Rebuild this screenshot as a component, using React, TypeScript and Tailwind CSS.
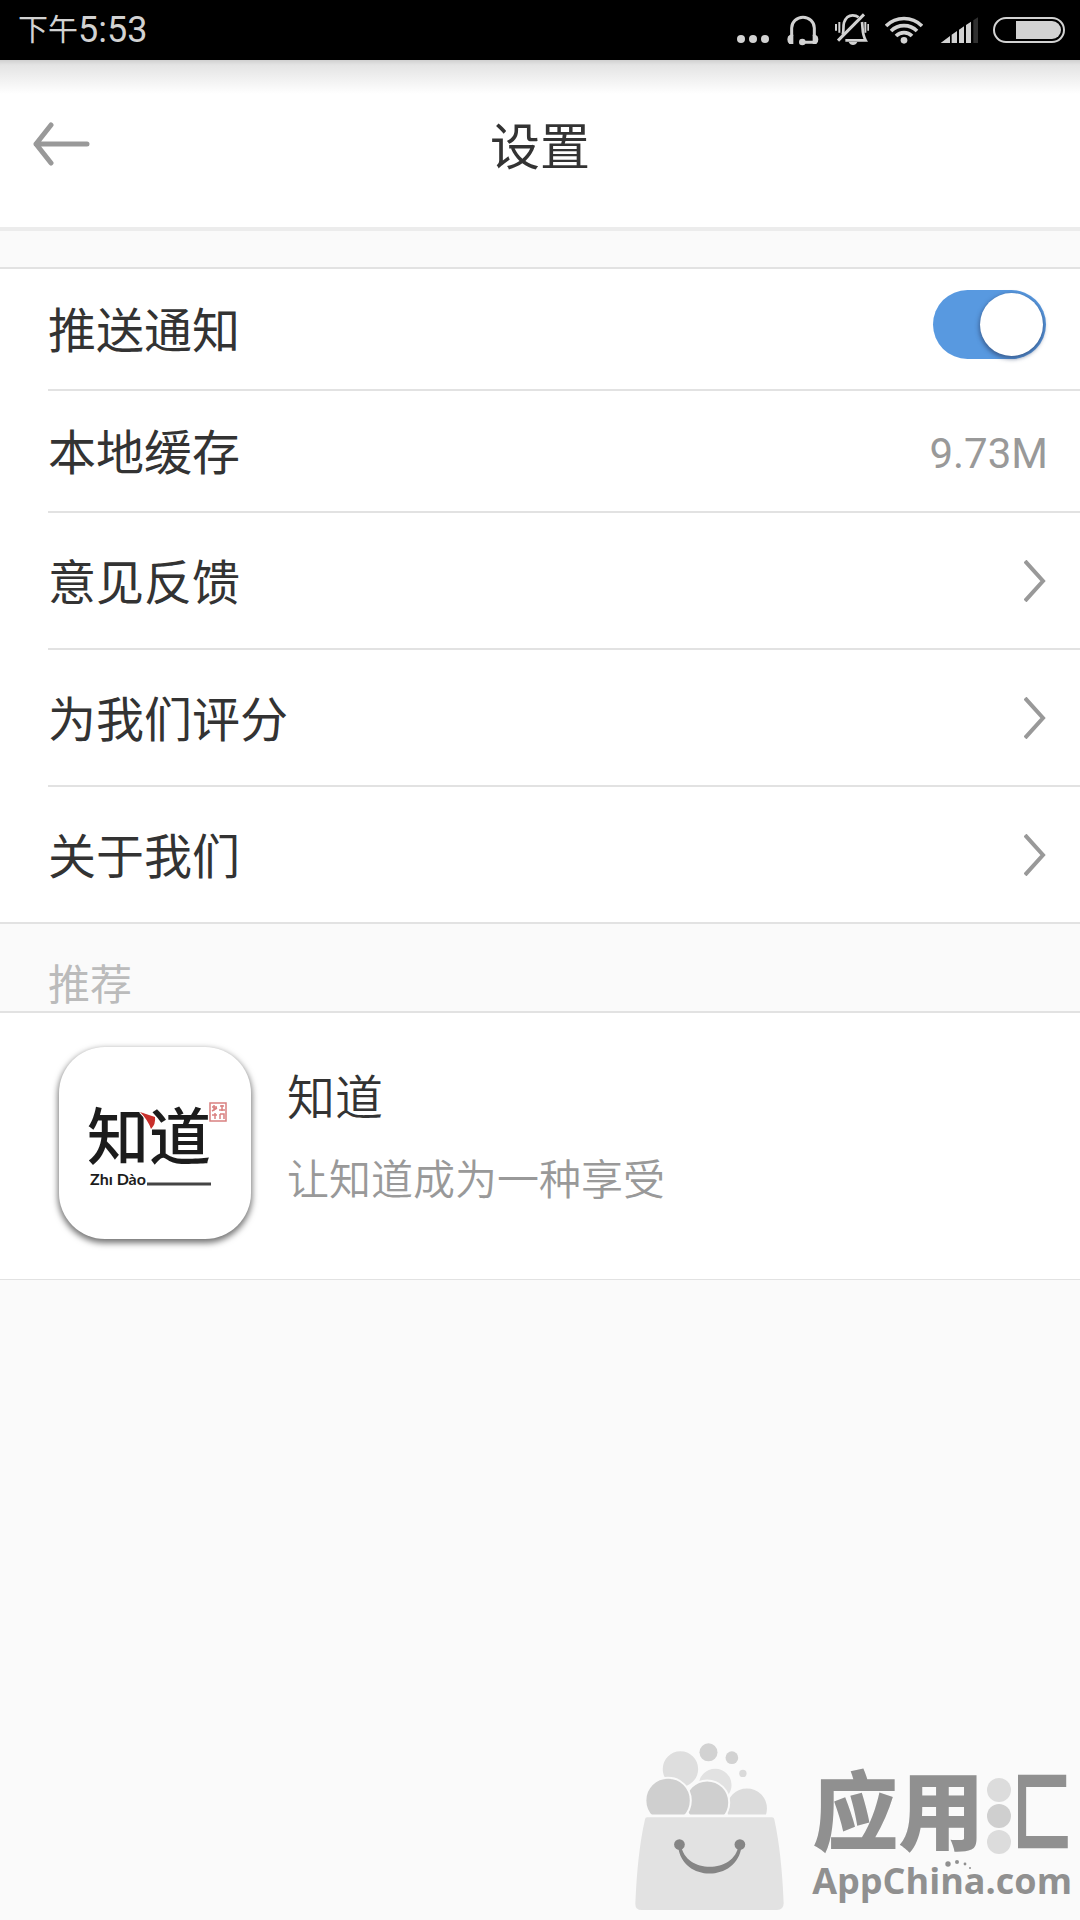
import { useState } from "react";
import type { ReactNode } from "react";

const links = ["意见反馈", "为我们评分", "关于我们"];

const StatusBar = () => (
  <div className="flex h-[60px] items-center justify-between bg-black pr-[15px] pl-[18px] text-[#d2d2d2]">
    <p className="flex items-center leading-[60px]">
      <span className="text-[30px]">下午</span>
      <span className="font-[Roboto,sans-serif] text-[36px]">5:53</span>
    </p>
    <div className="flex gap-4">
      <svg viewBox="48 0 102 180" className="h-[60px] w-[34px]" fill="currentColor">
        <circle cx="60" cy="117" r="12" />
        <circle cx="96" cy="117" r="12" />
        <circle cx="132" cy="117" r="12" />
      </svg>
      <svg
        viewBox="197 0 96 180"
        className="h-[60px] w-8"
        fill="none"
        stroke="currentColor"
        strokeWidth="9"
      >
        <path d="M211 108V84a34 32 0 0 1 68 0v24M243 127h36" />
        <path
          d="M206 104q-8 4-8 14t6 14h12v-28zM283 104q8 4 8 14t-6 14h-11v-28z"
          fill="currentColor"
          stroke="none"
        />
        <circle cx="243" cy="126" r="10" fill="currentColor" stroke="none" />
      </svg>
      <svg
        viewBox="341 0 102 180"
        className="h-[60px] w-[34px]"
        fill="none"
        stroke="currentColor"
        strokeWidth="8"
      >
        <path d="M364 104c4-12 1-25 4-36 5-15 15-22 26-22 8 0 13 2 18 6M422 66c3 18-1 34 11 55H372" />
        <path d="M350 122L428 43" strokeWidth="9" />
        <path d="M344 72v20M354 66v32M432 66v32M441 72v20" strokeWidth="6" />
        <path d="M382 126h26q-4 9-13 9t-13-9z" fill="currentColor" stroke="none" />
      </svg>
      <svg
        viewBox="495 0 114 180"
        className="h-[60px] w-[38px]"
        fill="none"
        stroke="currentColor"
        strokeWidth="11"
      >
        <path d="M498 78a76 76 0 0 1 108 0M513 93a55 55 0 0 1 78 0M528 108a34 34 0 0 1 48 0" />
        <circle cx="552" cy="121" r="10" fill="currentColor" stroke="none" />
      </svg>
      <svg viewBox="657 0 114 180" className="h-[60px] w-[38px] overflow-visible" fill="currentColor">
        <path d="M662 129l28-21v21zM695 104l16-11v36h-16zM717 89l15-10v50h-15zM738 75l15-10v64h-15z" />
        <path d="M760 61l14-9v77h-14z" fill="#303030" />
      </svg>
      <svg viewBox="819 0 216 180" className="h-[60px] w-[72px]">
        <rect
          x="822"
          y="54"
          width="210"
          height="72"
          rx="36"
          fill="none"
          stroke="currentColor"
          strokeWidth="6"
        />
        <path d="M888 63h108a27 27 0 0 1 0 54H888z" fill="currentColor" />
      </svg>
    </div>
  </div>
);

const Row = ({ children }: { children: ReactNode }) => (
  <li className="ml-12 border-b-2 border-[#e2e2e2] last:border-b-0">{children}</li>
);

const AppIcon = () => (
  <svg
    viewBox="0 0 192 192"
    className="size-48 rounded-[46px] bg-white shadow-[0_3px_6px_1px_rgba(0,0,0,0.55)]"
  >
    <g fill="#1c1c1c">
      <text x="28" y="113" fontSize="62" fontWeight="500">
        知道
      </text>
      <text x="31" y="138" fontSize="16" fontWeight="700" fontFamily="Lato, sans-serif">
        Zhı Dào
      </text>
    </g>
    <path d="M88 137h64" stroke="#444" strokeWidth="3" />
    <path
      d="M81 65l15 5q1 7-4 12-3-9-11-17z"
      fill="#c9302c"
      stroke="#fff"
      strokeWidth="2"
      paintOrder="stroke"
    />
    <g fill="none" stroke="#d98080" strokeWidth="1.5">
      <rect x="151" y="56" width="16" height="18" />
      <path d="M153 60h5M155 58v6M153 64l5-3M161 59h4M163 58v6M160 63h6M153 68h5M156 66v6M161 67h4v5M161 67v5" />
    </g>
  </svg>
);

const Watermark = () => (
  <footer className="mt-auto flex items-end justify-end pr-2 text-[#909090]">
    <svg viewBox="54 70 446 500" className="mr-7 mb-[10px] h-[167px] w-[149px]">
      <g stroke="#fafafa" strokeWidth="6">
        <circle cx="190" cy="148" r="56" fill="#dedede" />
        <circle cx="294" cy="196" r="52" fill="#e2e2e2" />
        <circle cx="389" cy="266" r="63" fill="#dcdcdc" />
        <circle cx="270" cy="248" r="66" fill="#cfcfcf" />
        <circle cx="153" cy="242" r="68" fill="#cfcfcf" />
      </g>
      <circle cx="274" cy="98" r="27" fill="#d2d2d2" />
      <circle cx="344" cy="114" r="19" fill="#d2d2d2" />
      <circle cx="377" cy="161" r="11" fill="#dadada" />
      <path d="M54 284h446v70H54z" fill="#fafafa" />
      <path
        d="M90 292h374q6 0 7 6 22 100 28 252 0 20-20 20H74q-20 0-19-20 6-152 29-252 1-6 6-6z"
        fill="#e2e2e2"
      />
      <g fill="#858585">
        <circle cx="187" cy="374" r="16" />
        <circle cx="368" cy="374" r="16" />
        <path d="M183 380c12 108 176 108 190 0l-9-4c-12 86-160 86-172 0z" />
      </g>
    </svg>
    <div className="mb-[18px]">
      <div className="relative text-[86px] leading-[90px] font-black whitespace-nowrap">
        应用汇
        {/* bubbles stand in for the water radical of 汇 */}
        <svg
          viewBox="0 0 34 90"
          className="absolute top-0 left-[172px] h-[90px] w-[34px]"
        >
          <path d="M0 0h34v90H0z" fill="#fafafa" />
          <circle cx="15" cy="20" r="12" fill="#dcdcdc" />
          <circle cx="15" cy="46" r="12" fill="#cfcfcf" />
          <circle cx="15" cy="72" r="12" fill="#dcdcdc" />
        </svg>
      </div>
      <div className="relative font-['Open_Sans',sans-serif] text-[36px] leading-[42px] font-bold">
        AppChina.com
        <svg
          viewBox="0 0 40 12"
          className="absolute top-0 left-[122px] h-3 w-10"
          fill="currentColor"
        >
          <circle cx="14" cy="4" r="2.7" />
          <circle cx="23" cy="2" r="2" />
          <circle cx="31" cy="4" r="1.4" />
          <circle cx="36" cy="8" r="1" />
        </svg>
      </div>
    </div>
  </footer>
);

export default function App() {
  const [push, setPush] = useState(true);

  return (
    <div className="flex min-h-screen flex-col bg-[#fafafa] font-[Roboto,'Noto_Sans_CJK_SC',sans-serif] text-[#333]">
      <StatusBar />
      <header className="grid h-[171px] grid-cols-[1fr_auto_1fr] items-center border-b-4 border-[#ececec] bg-white bg-linear-to-b from-[#d0d0d0] via-[#e4e4e4] via-[5px] to-white to-[34px] px-8">
        <button type="button" aria-label="返回" className="justify-self-start">
          <svg
            viewBox="0 0 60 44"
            className="h-11 w-[60px]"
            fill="none"
            stroke="#999"
            strokeWidth="5"
            strokeLinecap="round"
            strokeLinejoin="round"
          >
            <path d="M4 22h51M19 3L4 22l15 19" />
          </svg>
        </button>
        <h1 className="pt-2 text-[50px] leading-[60px]">设置</h1>
      </header>

      <main>
        <ul className="mt-9 border-y-2 border-[#e2e2e2] bg-white text-[48px]">
          <Row>
            <label className="flex h-[120px] items-center justify-between pr-[34px]">
              <span className="pt-[6px]">推送通知</span>
              <input
                type="checkbox"
                checked={push}
                onChange={(e) => setPush(e.target.checked)}
                className="mb-[10px] flex h-[69px] w-[113px] appearance-none items-center rounded-full bg-[#ccc] px-[3px] before:size-[63px] before:rounded-full before:bg-white before:shadow-[0_2px_4px_1px_rgba(40,60,100,0.6)] checked:justify-end checked:bg-[#5899e0]"
              />
            </label>
          </Row>
          <Row>
            <div className="flex h-[120px] items-center justify-between pr-8">
              <span className="pt-[6px]">本地缓存</span>
              <span className="pt-1 text-[42px] text-[#999]">9.73M</span>
            </div>
          </Row>
          {links.map((label) => (
            <Row key={label}>
              <a href="#" className="flex h-[135px] items-center justify-between pr-[34px]">
                <span className="pt-[6px]">{label}</span>
                <svg
                  viewBox="0 0 22 42"
                  className="h-[42px] w-[22px]"
                  fill="none"
                  stroke="#999"
                  strokeWidth="4"
                >
                  <path d="M1 1l18 20L1 41" />
                </svg>
              </a>
            </Row>
          ))}
        </ul>

        <h2 className="flex h-[87px] items-end pb-1 pl-12 text-[42px] leading-[42px] text-[#bbb]">
          推荐
        </h2>
        <a
          href="#"
          className="flex h-[269px] items-center gap-9 border-t-2 border-b border-[#e2e2e2] bg-white pr-8 pb-[6px] pl-[59px] font-[350]"
        >
          <AppIcon />
          <div className="pb-[6px]">
            <h3 className="text-[48px] leading-[82px]">知道</h3>
            <p className="text-[42px] leading-[82px] text-[#999]">让知道成为一种享受</p>
          </div>
        </a>
      </main>
      <Watermark />
    </div>
  );
}
